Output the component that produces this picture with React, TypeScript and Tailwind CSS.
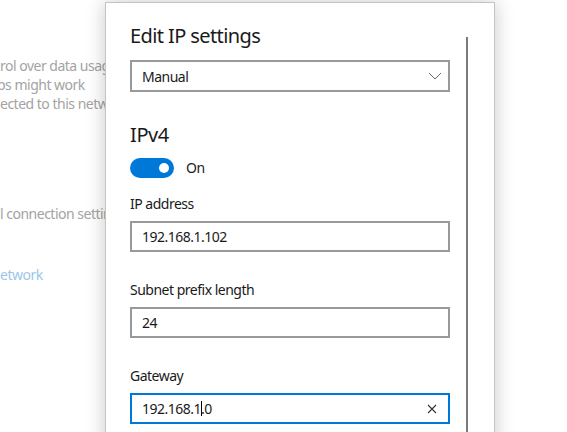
import React from "react";

const FONT = { fontFamily: '"Noto Sans", "Open Sans", sans-serif' };

function TextBox({ value, focused }: { value: React.ReactNode; focused?: boolean }) {
  return (
    <div
      className={`mt-[7px] h-[31px] w-[320px] flex items-center px-[10px] border-2 text-[14px] text-[#1a1a1a] ${
        focused ? "border-[#0078d7]" : "border-[#999999]"
      }`}
    >
      <div className="flex-1 flex items-center">{value}</div>
      {focused && (
        <svg width="10" height="10" viewBox="0 0 10 10" className="mr-[1px]">
          <path d="M1 1 L9 9 M9 1 L1 9" stroke="#333" strokeWidth="1.1" fill="none" />
        </svg>
      )}
    </div>
  );
}

export default function App() {
  return (
    <div className="relative w-[567px] h-[432px] overflow-hidden bg-white tracking-[-0.5px]" style={FONT}>
      {/* Settings page behind the dialog */}
      <div className="flex flex-col text-[14px] leading-[19px] text-[#a3a3a3] whitespace-nowrap pt-[56px]">
        <span>rol over data usage</span>
        <span className="-ml-[3px]">ps might work</span>
        <span>ected to this network</span>
        <span className="mt-[91px]">l connection settings</span>
        <span className="mt-[42px] text-[#9cc6e8]">etwork</span>
      </div>

      {/* Dialog */}
      <div className="absolute left-[105px] top-[2px] w-[390px] h-[460px] bg-white border border-[#c4c4c4] shadow-[0_0_18px_rgba(0,0,0,0.22)] flex">
        <div className="pl-[24px] w-[344px] flex flex-col">
          <div className="mt-[19px] text-[20px] leading-[28px] tracking-[-0.6px] text-[#1a1a1a]">Edit IP settings</div>

          <div className="mt-[10px] h-[32px] w-[320px] border-2 border-[#999999] flex items-center justify-between pl-[10px] pr-[6px] text-[14px] text-[#1a1a1a]">
            <span>Manual</span>
            <svg width="14" height="8" viewBox="0 0 14 8">
              <path d="M1 1 L7 7 L13 1" stroke="#666" strokeWidth="1" fill="none" />
            </svg>
          </div>

          <div className="mt-[29px] text-[20px] leading-[28px] tracking-[-0.4px] text-[#1a1a1a]">IPv4</div>

          <div className="mt-[8px] flex items-center gap-[12px]">
            <div className="w-[44px] h-[20px] rounded-full bg-[#0078d7] flex items-center justify-end pr-[5px]">
              <div className="w-[10px] h-[10px] rounded-full bg-white" />
            </div>
            <span className="text-[14px] text-[#1a1a1a]">On</span>
          </div>

          <div className="mt-[16px] text-[14px] leading-[20px] text-[#1a1a1a]">IP address</div>
          <TextBox value="192.168.1.102" />

          <div className="mt-[28px] text-[14px] leading-[20px] text-[#1a1a1a]">Subnet prefix length</div>
          <TextBox value="24" />

          <div className="mt-[28px] text-[14px] leading-[20px] text-[#1a1a1a]">Gateway</div>
          <TextBox
            focused
            value={
              <>
                <span>192.168.1</span>
                <span className="w-[1px] h-[15px] bg-black -mr-[1px]" />
                <span>.0</span>
              </>
            }
          />
        </div>
        <div className="ml-[16px] mt-[34px] w-[2px] bg-[#7a7a7a]" />
      </div>
    </div>
  );
}
